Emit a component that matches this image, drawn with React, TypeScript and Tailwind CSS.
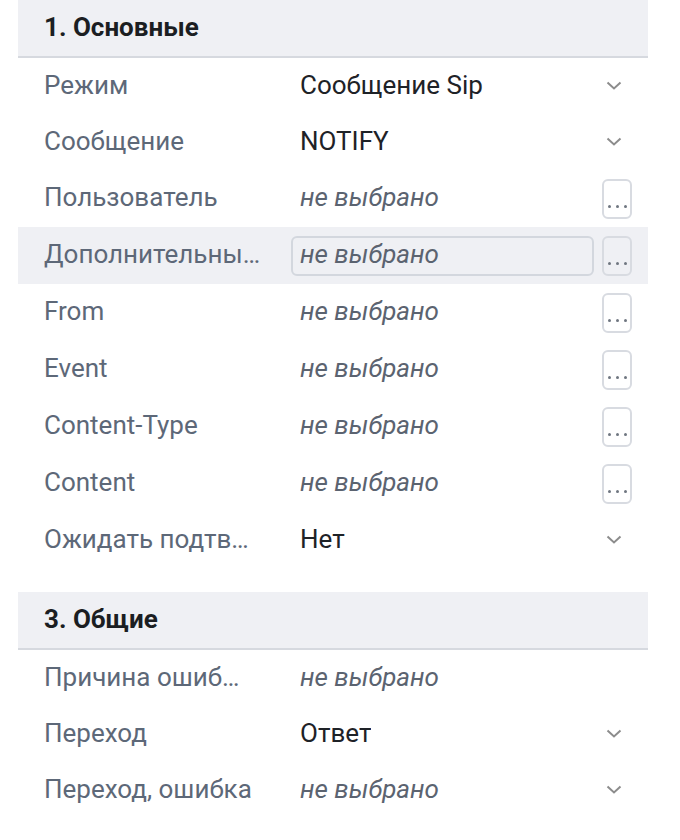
import type { ReactNode } from 'react';

type Kind = 'select' | 'button' | 'plain';

interface Field {
  label: string;
  value?: string;
  kind: Kind;
  active?: boolean;
  tight?: boolean;
}

const basic: Field[] = [
  { label: 'Режим', value: 'Сообщение Sip', kind: 'select' },
  { label: 'Сообщение', value: 'NOTIFY', kind: 'select' },
  { label: 'Пользователь', kind: 'button' },
  { label: 'Дополнительные параметры', kind: 'button', active: true },
  { label: 'From', kind: 'button' },
  { label: 'Event', kind: 'button' },
  { label: 'Content-Type', kind: 'button' },
  { label: 'Content', kind: 'button' },
  { label: 'Ожидать подтверждения', value: 'Нет', kind: 'select' },
];

const common: Field[] = [
  { label: 'Причина ошибки', kind: 'plain', tight: true },
  { label: 'Переход', value: 'Ответ', kind: 'select' },
  { label: 'Переход, ошибка', kind: 'select' },
];

function Chevron() {
  return (
    <svg width="16" height="10" viewBox="0 0 16 10" className="text-[#8c8c8c]">
      <path d="M1.5 1.5 8 7.5l6.5-6" fill="none" stroke="currentColor" strokeWidth="2" />
    </svg>
  );
}

function Row({ field }: { field: Field }) {
  const text = field.value ? (
    <span className="truncate pb-[3px] text-[#1e2227]">{field.value}</span>
  ) : (
    <span className="truncate pb-[3px] italic text-[#5b6370]">не выбрано</span>
  );

  let right: ReactNode = <div className="w-[30px]" />;
  if (field.kind === 'select') {
    right = (
      <div className="flex w-[30px] items-center justify-start pl-[4px]">
        <Chevron />
      </div>
    );
  } else if (field.kind === 'button') {
    right = (
      <button className="flex h-[40px] w-[30px] items-end justify-center rounded-[6px] border-2 border-[#d8dbe1] pb-[9px]">
        <span className="flex gap-[5px]">
          <i className="block h-[3px] w-[3px] rounded-full bg-[#6f7680]" />
          <i className="block h-[3px] w-[3px] rounded-full bg-[#6f7680]" />
          <i className="block h-[3px] w-[3px] rounded-full bg-[#6f7680]" />
        </span>
      </button>
    );
  }

  return (
    <div
      className={`flex items-center pl-[26px] pr-[16px] ${field.kind === 'button' ? 'h-[57px]' : 'h-[56px]'} ${field.active ? 'bg-[#eff0f4]' : ''}`}
    >
      <div className="w-[247px] shrink-0 pr-[30px]">
        <div
          className={`truncate pb-[3px] leading-[30px] text-[#5d6878] ${field.tight ? 'max-w-[200px]' : ''}`}
        >
          {field.label}
        </div>
      </div>
      <div
        className={`flex h-[40px] min-w-0 flex-1 items-center rounded-[6px] border-2 pl-[7px] ${field.active ? 'border-[#d3d7de]' : 'border-transparent'}`}
      >
        {text}
      </div>
      <div className="ml-[8px] flex shrink-0 items-center">{right}</div>
    </div>
  );
}

function Section({ title, fields }: { title: string; fields: Field[] }) {
  return (
    <section>
      <div className="flex h-[58px] items-center border-b-2 border-[#d6d9df] bg-[#eff0f4] pb-[3px] pl-[26px] text-[26px] font-bold text-[#1b1e22]">
        {title}
      </div>
      {fields.map((f) => (
        <Row key={f.label} field={f} />
      ))}
    </section>
  );
}

export default function App() {
  return (
    <div className="min-h-[840px] bg-white" style={{ fontFamily: 'Roboto, "Liberation Sans", sans-serif' }}>
      <div className="ml-[18px] flex w-[630px] flex-col gap-[24px] text-[26px] leading-[30px]">
        <Section title="1. Основные" fields={basic} />
        <Section title="3. Общие" fields={common} />
      </div>
    </div>
  );
}
